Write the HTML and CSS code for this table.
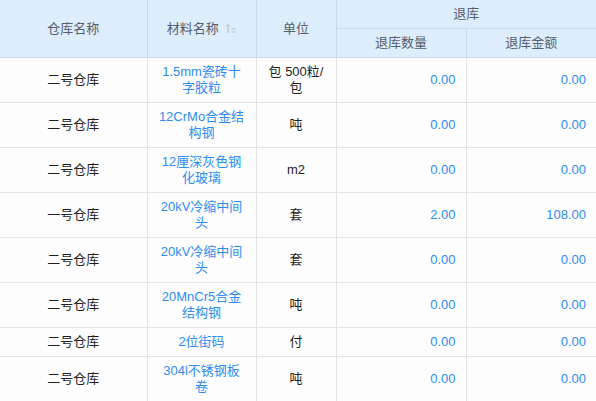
FILE: index.html
```html
<!DOCTYPE html>
<html lang="zh">
<head>
<meta charset="utf-8">
<link rel="stylesheet" href="styles.css">
</head>
<body>
<table class="grid">
  <colgroup>
    <col class="c-wh"><col class="c-mat"><col class="c-unit"><col class="c-num"><col class="c-num">
  </colgroup>
  <thead>
    <tr class="h1">
      <th rowspan="2">仓库名称</th>
      <th rowspan="2">材料名称 <svg class="sort" width="11" height="11" viewBox="0 0 11 11"><path d="M3 10V1.5M1 3.5L3 1.5L5 3.5M6.5 6h4M6.5 9h4" fill="none" stroke="#b4bcc6" stroke-width="1"/></svg></th>
      <th rowspan="2">单位</th>
      <th colspan="2">退库</th>
    </tr>
    <tr class="h2">
      <th>退库数量</th>
      <th>退库金额</th>
    </tr>
  </thead>
  <tbody>
    <tr><td>二号仓库</td><td class="link">1.5mm瓷砖十字胶粒</td><td>包 500粒/包</td><td class="num">0.00</td><td class="num">0.00</td></tr>
    <tr><td>二号仓库</td><td class="link">12CrMo合金结构钢</td><td>吨</td><td class="num">0.00</td><td class="num">0.00</td></tr>
    <tr><td>二号仓库</td><td class="link">12厘深灰色钢化玻璃</td><td>m2</td><td class="num">0.00</td><td class="num">0.00</td></tr>
    <tr><td>一号仓库</td><td class="link">20kV冷缩中间头</td><td>套</td><td class="num">2.00</td><td class="num">108.00</td></tr>
    <tr><td>二号仓库</td><td class="link">20kV冷缩中间头</td><td>套</td><td class="num">0.00</td><td class="num">0.00</td></tr>
    <tr><td>二号仓库</td><td class="link">20MnCr5合金结构钢</td><td>吨</td><td class="num">0.00</td><td class="num">0.00</td></tr>
    <tr><td>二号仓库</td><td class="link">2位街码</td><td>付</td><td class="num">0.00</td><td class="num">0.00</td></tr>
    <tr><td>二号仓库</td><td class="link">304l不锈钢板卷</td><td>吨</td><td class="num">0.00</td><td class="num">0.00</td></tr>
  </tbody>
</table>
</body>
</html>
```
FILE: styles.css
```css
html, body {
  margin: 0;
  padding: 0;
  background: #fdfdfe;
}
body {
  font-family: "Liberation Sans", "Noto Sans CJK SC", sans-serif;
  font-size: 13px;
  color: #1f1f1f;
  overflow: hidden;
}
.grid {
  width: 596px;
  table-layout: fixed;
  border-collapse: collapse;
}
.c-wh { width: 147px; }
.c-mat { width: 109px; }
.c-unit { width: 80px; }
.c-num { width: 130px; }
th {
  background: #ddedfb;
  color: #55606e;
  font-weight: normal;
  border: 1px solid #c8dbee;
  border-top: none;
  padding: 0 10px;
  line-height: 16px;
  text-align: center;
}
.h1 th { height: 28px; }
.h1 th[rowspan] { height: 57px; }
.h2 th { height: 28px; }
tr th:first-child { border-left: none; }
tr th:last-child { border-right: none; }
.sort { vertical-align: -1px; margin-left: 3px; }
td {
  border: 1px solid #e4e4e4;
  padding: 6px 10px;
  line-height: 16px;
  text-align: center;
  height: 16px;
  word-break: break-all;
}
tr td:first-child { border-left: none; }
tr td:last-child { border-right: none; }
tbody tr:first-child td { border-top: 1px solid #c8dbee; }
.link { color: #2d8cf0; }
.num { color: #2d8cf0; text-align: right; }
```
